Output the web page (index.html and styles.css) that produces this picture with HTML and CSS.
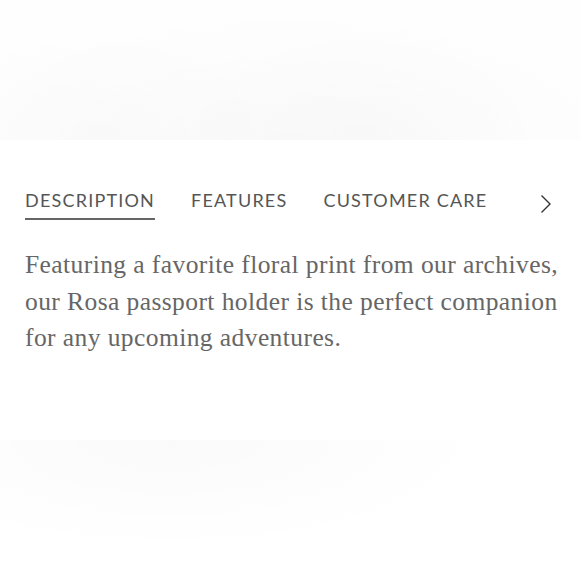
FILE: index.html
```html
<!DOCTYPE html>
<html>
<head>
<meta charset="utf-8">
<link rel="stylesheet" href="styles.css">
</head>
<body>
<div class="page">
  <div class="top-shade"></div>
  <section class="details">
    <nav class="tabs">
      <span class="tab active">DESCRIPTION</span>
      <span class="tab">FEATURES</span>
      <span class="tab">CUSTOMER CARE</span>
      <span class="next">
        <svg width="12" height="20" viewBox="0 0 12 20"><path d="M1.5 1.5 L10 10 L1.5 18.5" fill="none" stroke="#333" stroke-width="1.4"/></svg>
      </span>
    </nav>
    <p class="desc">Featuring a favorite floral print from our archives, our Rosa passport holder is the perfect companion for any upcoming adventures.</p>
  </section>
  <div class="bottom-shade"></div>
</div>
</body>
</html>
```
FILE: styles.css
```css
html, body { margin: 0; padding: 0; background: #fff; }
.page { width: 580px; height: 580px; overflow: hidden; display: flex; flex-direction: column; }
.top-shade {
  height: 140px; flex: none;
  background:
    radial-gradient(ellipse 200px 120px at 90px 140px, rgba(0,0,0,0.012), rgba(0,0,0,0) 100%),
    radial-gradient(ellipse 200px 120px at 360px 140px, rgba(0,0,0,0.012), rgba(0,0,0,0) 100%),
    radial-gradient(ellipse 360px 150px at 290px 150px, rgba(0,0,0,0.018), rgba(0,0,0,0.005) 100%);
}
.details { height: 300px; flex: none; padding: 0 0 0 25px; box-sizing: border-box; }
.tabs { display: flex; align-items: flex-start; margin-top: 49px; height: 31px; position: relative; }
.tab {
  font-family: Lato, "Liberation Sans", sans-serif;
  font-size: 18px; letter-spacing: 1.2px; color: #555;
  margin-right: 36px; line-height: 22px; padding-bottom: 7px;
}
.tab.active { border-bottom: 2px solid #666; }
.next { position: absolute; left: 515px; top: 5px; }
.desc {
  margin: 27px 0 0 0; width: 545px;
  font-family: "Liberation Serif", Georgia, serif;
  font-size: 25.5px; letter-spacing: 0.42px; line-height: 36.5px; color: #666;
}
.bottom-shade {
  flex: 1;
  background:
    radial-gradient(ellipse 320px 110px at 170px 0px, rgba(0,0,0,0.018), rgba(0,0,0,0) 100%);
}
```
